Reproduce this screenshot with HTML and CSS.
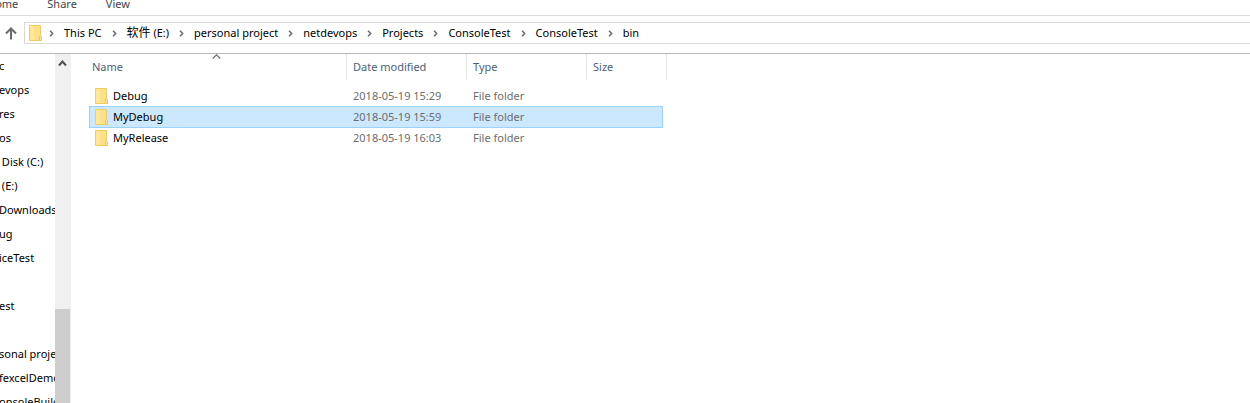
FILE: index.html
```html
<!DOCTYPE html>
<html lang="en">
<head>
    <meta charset="UTF-8">
    <meta name="viewport" content="width=device-width, initial-scale=1.0">
    <title>bin</title>
    <link rel="stylesheet" href="styles.css">
</head>
<body>
    <svg class="defs" width="0" height="0">
        <symbol id="folder" viewBox="0 0 13 16">
            <path d="M.5.5h11v10l1 1v4H.5z" fill="#fde08a" stroke="#f0cb62"/>
            <path d="M1 1h4v14H1z" fill="#fee79c"/>
            <path d="M10.500 15.500v-4.500l1-.5 1 1v4z" fill="#fee596" stroke="#eec75c"/>
        </symbol>
        <symbol id="chevron" viewBox="0 0 5 7">
            <path d="M1 .8l2.700 2.700L1 6.200" fill="none" stroke="#6b6b6b" stroke-width="1.500"/>
        </symbol>
    </svg>

    <nav class="ribbon">
        <a class="tab" href="#">Home</a>
        <a class="tab" href="#">Share</a>
        <a class="tab" href="#">View</a>
    </nav>

    <div class="toolbar">
        <button class="up" aria-label="Up">
            <svg width="12" height="13" viewBox="0 0 12 13"><path d="M6 12.500V1.500M1 6.500l5-5 5 5" fill="none" stroke="#6a6a6a" stroke-width="2"/></svg>
        </button>
        <div class="address">
            <svg class="folder" width="13" height="16"><use href="#folder"/></svg>
            <svg class="sep" width="5" height="7"><use href="#chevron"/></svg>
            <a href="#">This PC</a>
            <svg class="sep" width="5" height="7"><use href="#chevron"/></svg>
            <a href="#"><span class="cjk" lang="zh">软件</span> (E:)</a>
            <svg class="sep" width="5" height="7"><use href="#chevron"/></svg>
            <a href="#">personal project</a>
            <svg class="sep" width="5" height="7"><use href="#chevron"/></svg>
            <a href="#">netdevops</a>
            <svg class="sep" width="5" height="7"><use href="#chevron"/></svg>
            <a href="#">Projects</a>
            <svg class="sep" width="5" height="7"><use href="#chevron"/></svg>
            <a href="#">ConsoleTest</a>
            <svg class="sep" width="5" height="7"><use href="#chevron"/></svg>
            <a href="#">ConsoleTest</a>
            <svg class="sep" width="5" height="7"><use href="#chevron"/></svg>
            <a href="#">bin</a>
        </div>
    </div>

    <main class="explorer">
        <ul class="tree">
            <li>c</li>
            <li>evops</li>
            <li>res</li>
            <li>os</li>
            <li>&nbsp;Disk (C:)</li>
            <li>&nbsp;(E:)</li>
            <li>Downloads</li>
            <li>ug</li>
            <li>iceTest</li>
            <li></li>
            <li>est</li>
            <li></li>
            <li>sonal project</li>
            <li>fexcelDemo</li>
            <li>onsoleBuild</li>
        </ul>
        <div class="scrollbar">
            <button class="scroll-up" aria-label="Scroll up">
                <svg width="9" height="7" viewBox="0 0 9 7"><path d="M1 5.500l3.500-4 3.500 4" fill="none" stroke="#505050" stroke-width="2"/></svg>
            </button>
            <div class="thumb"></div>
        </div>
        <section class="files">
            <table>
                <colgroup>
                    <col class="col-name">
                    <col class="col-date">
                    <col class="col-type">
                    <col class="col-size">
                    <col class="col-end">
                </colgroup>
                <thead>
                    <tr>
                        <th>Name
                            <svg class="sort" width="9" height="5" viewBox="0 0 9 5"><path d="M.7 4.500l3.800-3.700 3.800 3.700" fill="none" stroke="#707070" stroke-width="1.200"/></svg>
                        </th>
                        <th>Date modified</th>
                        <th>Type</th>
                        <th colspan="2">Size</th>
                    </tr>
                </thead>
                <tbody>
                    <tr>
                        <td><span class="name"><svg width="13" height="16"><use href="#folder"/></svg>Debug</span></td>
                        <td>2018-05-19 15:29</td>
                        <td>File folder</td>
                        <td></td>
                        <td></td>
                    </tr>
                    <tr class="selected">
                        <td><span class="name"><svg width="13" height="16"><use href="#folder"/></svg>MyDebug</span></td>
                        <td>2018-05-19 15:59</td>
                        <td>File folder</td>
                        <td></td>
                        <td></td>
                    </tr>
                    <tr>
                        <td><span class="name"><svg width="13" height="16"><use href="#folder"/></svg>MyRelease</span></td>
                        <td>2018-05-19 16:03</td>
                        <td>File folder</td>
                        <td></td>
                        <td></td>
                    </tr>
                </tbody>
            </table>
        </section>
    </main>
</body>
</html>
```
FILE: styles.css
```css
* {
    margin: 0;
    padding: 0;
    box-sizing: border-box;
}
body {
    height: 100vh;
    display: flex;
    flex-direction: column;
    overflow: hidden;
    background-color: #fff;
    color: #000;
    font-family: "Noto Sans", "Noto Sans CJK SC", sans-serif;
    font-size: 11px;
    line-height: 16px;
}
a {
    color: inherit;
    text-decoration: none;
}
button {
    border: none;
    background: none;
}
.defs {
    position: absolute;
}

/* ribbon tabs */
.ribbon {
    height: 16px;
    flex: none;
    display: flex;
    align-items: flex-end;
    gap: 29px;
    padding-bottom: 3px;
    margin-left: -13px;
    border-bottom: 1px solid #dadbdc;
    color: #444;
}

/* address bar */
.toolbar {
    flex: none;
    display: flex;
    height: 38px;
    padding: 6px 0 9px;
    border-bottom: 1px solid #b8b8b8;
}
.up {
    width: 24px;
    padding-right: 2px;
    display: flex;
    align-items: center;
    justify-content: center;
}
.address {
    flex: 1;
    display: flex;
    align-items: center;
    padding-left: 4px;
    border: 1px solid #d9d9d9;
    border-right: none;
    white-space: nowrap;
}
.sep {
    margin: 0 10px;
}
.folder + .sep {
    margin-left: 7px;
}
.cjk {
    font-size: 12px;
}

.explorer {
    flex: 1;
    min-height: 0;
    display: flex;
}

/* left tree */
.tree {
    width: 55px;
    overflow: hidden;
    list-style: none;
    white-space: nowrap;
}
.tree li {
    height: 24px;
    line-height: 24px;
    margin-left: -1px;
}
.scrollbar {
    width: 16px;
    display: flex;
    flex-direction: column;
    justify-content: space-between;
    background-color: #f0f0f0;
}
.scroll-up {
    height: 17px;
    padding-right: 2px;
}
.thumb {
    height: 27%;
    margin-right: 1px;
    background-color: #cdcdcd;
}

/* file list */
.files {
    flex: 1;
    padding-left: 18px;
}
table {
    width: 578px;
    table-layout: fixed;
    border-collapse: separate;
    border-spacing: 0;
}
.col-name {
    width: 258px;
}
.col-date,
.col-type {
    width: 120px;
}
.col-size {
    width: 76px;
}
.col-end {
    width: 4px;
}
th {
    position: relative;
    height: 26px;
    padding-left: 6px;
    border-right: 1px solid #e5e5e5;
    color: #4c607a;
    font-weight: normal;
    text-align: left;
}
th:first-child {
    padding-left: 3px;
}
.sort {
    position: absolute;
    top: 0;
    left: 50%;
    margin-left: -6px;
}
tbody::before {
    content: "";
    display: table-row;
    height: 5px;
}
td {
    height: 21px;
    padding-left: 6px;
    color: #6d6d6d;
}
td:first-child {
    color: #000;
}
.name {
    display: flex;
    align-items: center;
    gap: 5px;
}
.selected td {
    height: 22px;
    background-color: #cce8ff;
    border: solid #99d1ff;
    border-width: 1px 0;
}
.selected + tr td {
    height: 20px;
}
.selected td:first-child {
    border-left-width: 1px;
    padding-left: 5px;
}
.selected td:nth-child(4) {
    border-right-width: 1px;
}
.selected td:last-child {
    background: none;
    border: none;
}
```
